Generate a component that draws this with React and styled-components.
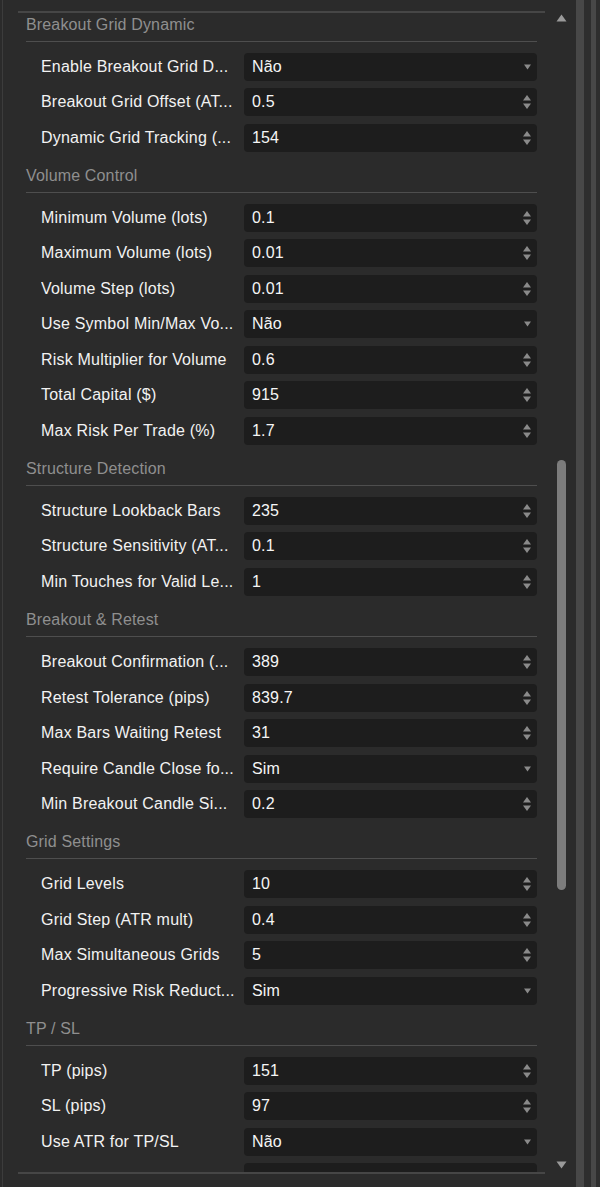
import React from "react";
import styled, { createGlobalStyle } from "styled-components";

const GlobalStyle = createGlobalStyle`
  html, body {
    margin: 0;
    padding: 0;
    background: #2b2b2b;
  }
  * { box-sizing: border-box; }
`;

const Page = styled.div`
  display: flex;
  width: 600px;
  height: 1187px;
  padding-left: 2px;
  background: #2b2b2b;
  font-family: "Liberation Sans", Arial, sans-serif;
  overflow: hidden;
`;

const Panel = styled.div`
  display: flex;
  flex: 1;
  border-left: 1px solid #3c3c3c;
  padding-left: 15px;
`;

const Viewport = styled.div`
  width: 527px;
  height: 1163px;
  margin-top: 11px;
  border-top: 2px solid #464646;
  border-bottom: 2px solid #464646;
  overflow: hidden;
  padding-top: 2.5px;
`;

const Section = styled.section`
  padding: 0 8px;
  margin-bottom: 15.2px;
`;

const SectionTitle = styled.div`
  font-size: 16px;
  line-height: 18px;
  letter-spacing: 0.15px;
  color: #8f8f8f;
  padding-bottom: 7px;
  border-bottom: 1px solid #4e4e4e;
`;

const Rows = styled.div`
  display: flex;
  flex-direction: column;
  gap: 7.5px;
  margin-top: 11px;
  padding-left: 15px;
`;

const Row = styled.div`
  display: flex;
  align-items: center;
  height: 28px;
`;

const Label = styled.div`
  width: 203px;
  flex-shrink: 0;
  padding-right: 6px;
  font-size: 16px;
  letter-spacing: 0.2px;
  color: #f2f2f2;
  white-space: nowrap;
  overflow: hidden;
`;

const Field = styled.div`
  flex: 1;
  height: 28px;
  display: flex;
  align-items: center;
  justify-content: space-between;
  padding: 0 5px 0 8px;
  background: #1d1d1d;
  border-radius: 4px;
`;

const Value = styled.span`
  font-size: 16px;
  letter-spacing: 0.15px;
  color: #f5f5f5;
  white-space: nowrap;
`;

const ScrollBar = styled.div`
  width: 31px;
  display: flex;
  flex-direction: column;
  align-items: center;
  padding: 14px 0 18px 1px;
`;

const Track = styled.div`
  flex: 1;
  display: flex;
  flex-direction: column;
  align-items: center;
`;

const Thumb = styled.div`
  width: 9px;
  height: ${(p) => p.$size}px;
  margin-top: ${(p) => p.$offset}px;
  border-radius: 5px;
  background: #7c7c7c;
`;

const Edge = styled.div`
  width: ${(p) => p.$w}px;
  flex-shrink: 0;
  background: ${(p) => (p.$light ? "#484848" : "#2e2e2e")};
`;

const ArrowSvg = ({ down }) => (
  <svg width="11" height="8" viewBox="0 0 11 8">
    <polygon
      points={down ? "0.5,0.5 10.5,0.5 5.5,7.5" : "0.5,7.5 10.5,7.5 5.5,0.5"}
      fill="#9a9a9a"
    />
  </svg>
);

const SelectCaret = () => (
  <svg width="9" height="8" viewBox="0 0 9 8">
    <polygon points="1,1.5 8,1.5 4.5,6.5" fill="#8a8a8a" />
  </svg>
);

const Spinner = () => (
  <svg width="10" height="16" viewBox="0 0 10 16">
    <polygon points="1,6.5 9,6.5 5,1" fill="#8a8a8a" />
    <polygon points="1,9.5 9,9.5 5,15" fill="#8a8a8a" />
  </svg>
);

const sections = [
  {
    title: "Breakout Grid Dynamic",
    rows: [
      ["Enable Breakout Grid D...", "Não", "select"],
      ["Breakout Grid Offset (AT...", "0.5"],
      ["Dynamic Grid Tracking (...", "154"],
    ],
  },
  {
    title: "Volume Control",
    rows: [
      ["Minimum Volume (lots)", "0.1"],
      ["Maximum Volume (lots)", "0.01"],
      ["Volume Step (lots)", "0.01"],
      ["Use Symbol Min/Max Vo...", "Não", "select"],
      ["Risk Multiplier for Volume", "0.6"],
      ["Total Capital ($)", "915"],
      ["Max Risk Per Trade (%)", "1.7"],
    ],
  },
  {
    title: "Structure Detection",
    rows: [
      ["Structure Lookback Bars", "235"],
      ["Structure Sensitivity (AT...", "0.1"],
      ["Min Touches for Valid Le...", "1"],
    ],
  },
  {
    title: "Breakout & Retest",
    rows: [
      ["Breakout Confirmation (...", "389"],
      ["Retest Tolerance (pips)", "839.7"],
      ["Max Bars Waiting Retest", "31"],
      ["Require Candle Close fo...", "Sim", "select"],
      ["Min Breakout Candle Si...", "0.2"],
    ],
  },
  {
    title: "Grid Settings",
    rows: [
      ["Grid Levels", "10"],
      ["Grid Step (ATR mult)", "0.4"],
      ["Max Simultaneous Grids", "5"],
      ["Progressive Risk Reduct...", "Sim", "select"],
    ],
  },
  {
    title: "TP / SL",
    rows: [
      ["TP (pips)", "151"],
      ["SL (pips)", "97"],
      ["Use ATR for TP/SL", "Não", "select"],
      // next row is scrolled below the fold, only its box edge shows
      ["", "", "hidden"],
    ],
  },
];

function SettingRow({ label, value, kind }) {
  return (
    <Row>
      <Label>{label}</Label>
      <Field>
        <Value>{value}</Value>
        {kind === "select" && <SelectCaret />}
        {!kind && <Spinner />}
      </Field>
    </Row>
  );
}

export default function App() {
  return (
    <>
      <GlobalStyle />
      <Page>
        <Panel>
          <Viewport>
            {sections.map((s) => (
              <Section key={s.title}>
                <SectionTitle>{s.title}</SectionTitle>
                <Rows>
                  {s.rows.map(([label, value, kind], i) => (
                    <SettingRow key={i} label={label} value={value} kind={kind} />
                  ))}
                </Rows>
              </Section>
            ))}
          </Viewport>
          <ScrollBar>
            <ArrowSvg />
            <Track>
              <Thumb $offset={438} $size={430} />
            </Track>
            <ArrowSvg down />
          </ScrollBar>
          <Edge $w={8} $light />
          <Edge $w={7} />
          <Edge $w={5} $light />
          <Edge $w={4} />
        </Panel>
      </Page>
    </>
  );
}
